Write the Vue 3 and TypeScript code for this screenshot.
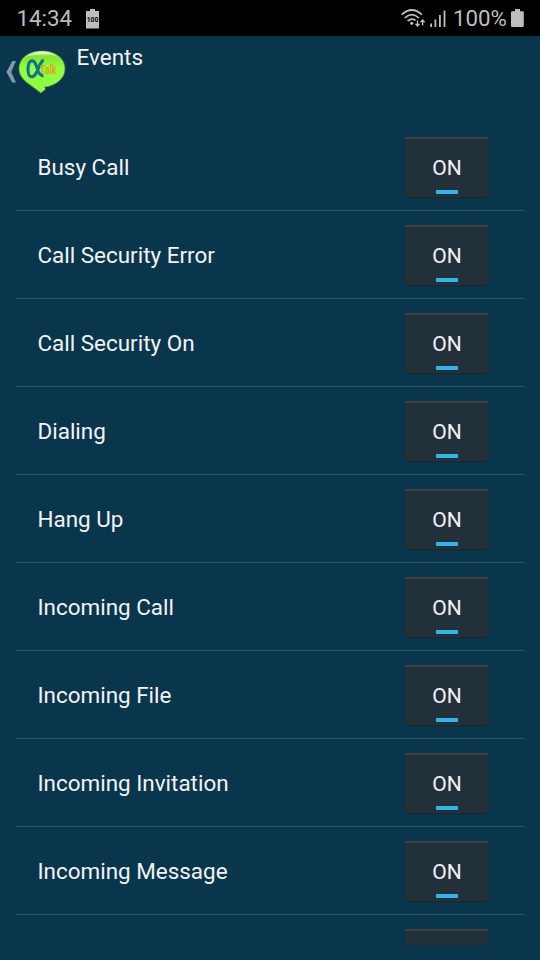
<script setup lang="ts">
interface EventItem {
  label: string
  on: boolean
}

const events: EventItem[] = [
  'Busy Call',
  'Call Security Error',
  'Call Security On',
  'Dialing',
  'Hang Up',
  'Incoming Call',
  'Incoming File',
  'Incoming Invitation',
  'Incoming Message',
].map((label) => ({ label, on: true }))
</script>

<template>
  <div class="screen">
    <header class="status">
      <span class="clock">14:34</span>
      <svg class="mini-battery" width="13" height="20" viewBox="0 0 13 20">
        <path d="M4 0h5v2h4v17.500H0V2h4z" fill="#bdbdbd" />
        <text x="6.500" y="13" text-anchor="middle" textLength="11.500" lengthAdjust="spacingAndGlyphs">100</text>
      </svg>
      <svg class="signals" width="46" height="21" viewBox="0 0 46 21">
        <g fill="none" stroke="#c2c2c2" stroke-width="1.700">
          <path d="M.7 5.600Q10.800-3.600 20.900 5.600" />
          <path d="M3.700 9Q10.800 2.400 17.900 9" />
          <path d="M6.600 12.200Q10.800 8.400 14.600 11.400" />
        </g>
        <circle cx="10.700" cy="14.300" r="1.500" fill="#c2c2c2" />
        <path d="M16.500 11.500v5M14.500 14.800l2 2.200 2-2.200M21.600 16.500v-5M19.600 13.200l2-2.200 2 2.200" fill="none" stroke="#c2c2c2" stroke-width="1.300" />
        <path d="M29.200 14.500h1.800V18h-1.800zM33.500 10.500h1.800V18h-1.800zM38 6h1.800v12H38zM42.600 1.500h1.800V18h-1.800z" fill="#bdbdbd" />
      </svg>
      <span class="percent">100%</span>
      <svg class="battery" width="13" height="18" viewBox="0 0 13 18">
        <path d="M4 0h5v2.200h2.700q1.100 0 1.100 1.100v13.500q0 1.200-1.200 1.200H1.200Q0 18 0 16.800V3.300q0-1.100 1.100-1.100H4z" fill="#bdbdbd" />
      </svg>
    </header>

    <div class="action-bar">
      <svg class="back" width="11" height="22" viewBox="0 0 11 22">
        <path d="M6.200 0H10L5.200 11 10 21.500H6.200L.5 11z" fill="#8299a5" />
      </svg>
      <svg class="logo" width="48" height="44" viewBox="0 0 48 44">
        <defs>
          <linearGradient id="bubble" x1="0" y1="0" x2="0" y2="1">
            <stop offset="0" stop-color="#c6e8a0" />
            <stop offset=".14" stop-color="#84e52f" />
            <stop offset=".4" stop-color="#93fb47" />
            <stop offset="1" stop-color="#8cff3e" />
          </linearGradient>
          <linearGradient id="gloss" x1="0" y1="0" x2="0" y2="1">
            <stop offset="0" stop-color="#f5ffe9" stop-opacity=".9" />
            <stop offset="1" stop-color="#b4f588" stop-opacity="0" />
          </linearGradient>
        </defs>
        <path d="M24 1C10.500 1 1 8.500 1 18.500c0 6 3.500 10.500 8.500 14.500L23 43l4.200-3.500-1.200-2.200C38.500 35.500 47 28.500 47 18.500 47 8.500 37.500 1 24 1z" fill="url(#bubble)" stroke="#648c42" stroke-width=".7" />
        <path d="M24 1.500C14 1.500 6.500 6 4.500 10 9 5.500 17 4.500 25 4.500S38 5 42.500 9C38.500 4 32 1.500 24 1.500z" fill="url(#gloss)" />
        <path d="M24.600 39.600l2.700-.3-1.200-2.400z" fill="#d9f3b4" />
        <path d="M25.700 10.700C22.700 11 21.500 17 19 22c-1.500 3.200-3.200 4.900-5.200 4.900-2.500 0-3.700-3.500-3.700-7.700 0-4.800 1.500-8.200 4.200-8.200 2.800 0 4 4 5.300 8.400 1.200 4 2.900 6.800 5.900 6.500" fill="none" stroke="#3e8a5b" stroke-width="3" />
        <path d="M25.400 10.200C22.400 10.500 21.200 16.500 18.700 21.500c-1.500 3.200-3.200 4.900-5.200 4.900-2.500 0-3.700-3.500-3.700-7.700 0-4.800 1.500-8.200 4.200-8.200 2.800 0 4 4 5.300 8.400 1.200 4 2.900 6.800 5.900 6.500" fill="none" stroke="#086f96" stroke-width="2.300" />
        <text class="logo-text" x="21.700" y="23.600" textLength="17" lengthAdjust="spacingAndGlyphs">Talk</text>
      </svg>
      <h1 class="title">Events</h1>
    </div>

    <main class="list">
      <div v-for="item in events" :key="item.label" class="row">
        <span class="label">{{ item.label }}</span>
        <button class="toggle" type="button" :aria-pressed="item.on">
          {{ item.on ? 'ON' : 'OFF' }}
          <i v-if="item.on" class="indicator"></i>
        </button>
      </div>
      <div class="row">
        <span class="label"></span>
        <button class="toggle" type="button"></button>
      </div>
    </main>
  </div>
</template>

<style>
body {
  background: #09364d;
}
</style>

<style scoped>
.screen {
  width: 540px;
  height: 960px;
  overflow: hidden;
  background: #09364d;
  color: #f3f3f3;
  font-family: Roboto, sans-serif;
  display: flex;
  flex-direction: column;
}
.status {
  flex: none;
  height: 36px;
  box-sizing: border-box;
  padding: 0 16px 0 16.500px;
  display: flex;
  align-items: flex-start;
  background: #000;
  color: #bdbdbd;
  font-size: 22.300px;
  line-height: 37px;
}
.clock {
  width: 69.500px;
}
.mini-battery {
  margin-top: 8.500px;
}
.mini-battery text {
  font: bold 7px Roboto, sans-serif;
  fill: #000;
}
.signals {
  margin: 9px 6px 0 auto;
}
.percent {
  width: 58px;
}
.battery {
  margin-top: 9px;
}
.action-bar {
  flex: none;
  height: 87px;
  padding-left: 6px;
  display: flex;
  align-items: flex-start;
}
.back {
  margin-top: 25px;
}
.logo {
  margin: 14px 0 0 1px;
}
.logo-text {
  font: bold 12px Roboto, sans-serif;
  fill: #d3ac14;
}
.title {
  margin: 6px 0 0 10.500px;
  font-size: 22.500px;
  line-height: 30px;
  font-weight: 400;
}
.list {
  flex: none;
  height: 822px;
  margin: 0 15px;
  overflow: hidden;
}
.row {
  height: 88px;
  box-sizing: border-box;
  padding: 14px 36px 0 22.500px;
  border-bottom: 1px solid #2f5467;
  display: flex;
  justify-content: space-between;
  align-items: flex-start;
}
.label {
  font-size: 22.450px;
  line-height: 60px;
}
.toggle {
  width: 84px;
  height: 61px;
  padding: 0;
  border: 0;
  border-top: 1px solid #454d4c;
  border-radius: 2px;
  background: #22303a;
  box-shadow: inset 0 1px #303c41, inset 0 -1px #1a2a34, 0 0 1px #082838;
  color: #f3f3f3;
  font: 21px Roboto, sans-serif;
  display: grid;
  grid-template-rows: 52px 4px;
  justify-items: center;
  align-content: start;
  line-height: 60px;
}
.indicator {
  width: 22px;
  height: 4px;
  background: #33b5e5;
}
</style>
